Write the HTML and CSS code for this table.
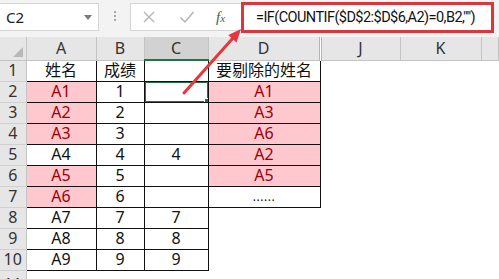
FILE: index.html
```html
<!DOCTYPE html>
<html lang="zh-CN">
<head>
<meta charset="utf-8">
<title>剔除姓名</title>
<link rel="stylesheet" href="styles.css">
</head>
<body>
<div class="app">
  <div class="bar">
    <div class="namebox"><span class="ref">C2</span><span class="drop"></span></div>
    <div class="grip"><i></i><i></i><i></i></div>
    <div class="fxbox">
      <svg class="ico" width="14" height="14" viewBox="0 0 14 14"><path d="M2 2 L12 12 M12 2 L2 12" stroke="#b4b4b4" stroke-width="1.4" fill="none"/></svg>
      <svg class="ico" width="16" height="14" viewBox="0 0 16 14"><path d="M1.5 7.5 L6 12 L14.5 2" stroke="#b4b4b4" stroke-width="1.5" fill="none"/></svg>
      <span class="fx">f<span class="x">x</span></span>
    </div>
    <div class="formula">=IF(COUNTIF($D$2:$D$6,A2)=0,B2,"")</div>
  </div>

  <table class="sheet">
    <colgroup>
      <col class="c-rh"><col class="c-a"><col class="c-b"><col class="c-c"><col class="c-d"><col class="c-j"><col class="c-k"><col>
    </colgroup>
    <thead>
      <tr>
        <th class="corner"><span class="tri"></span></th>
        <th>A</th><th>B</th><th class="on">C</th><th>D</th><th class="gap">J</th><th>K</th><th></th>
      </tr>
    </thead>
    <tbody>
      <tr><th>1</th><td class="b">姓名</td><td class="b">成绩</td><td class="b"></td><td class="b">要剔除的姓名</td><td></td><td></td><td></td></tr>
      <tr><th>2</th><td class="b p">A1</td><td class="b">1</td><td class="b sel"></td><td class="b p">A1</td><td></td><td></td><td></td></tr>
      <tr><th>3</th><td class="b p">A2</td><td class="b">2</td><td class="b"></td><td class="b p">A3</td><td></td><td></td><td></td></tr>
      <tr><th>4</th><td class="b p">A3</td><td class="b">3</td><td class="b"></td><td class="b p">A6</td><td></td><td></td><td></td></tr>
      <tr><th>5</th><td class="b">A4</td><td class="b">4</td><td class="b">4</td><td class="b p">A2</td><td></td><td></td><td></td></tr>
      <tr><th>6</th><td class="b p">A5</td><td class="b">5</td><td class="b"></td><td class="b p">A5</td><td></td><td></td><td></td></tr>
      <tr><th>7</th><td class="b p">A6</td><td class="b">6</td><td class="b"></td><td class="b dots">......</td><td></td><td></td><td></td></tr>
      <tr><th>8</th><td class="b">A7</td><td class="b">7</td><td class="b">7</td><td></td><td></td><td></td><td></td></tr>
      <tr><th>9</th><td class="b">A8</td><td class="b">8</td><td class="b">8</td><td></td><td></td><td></td><td></td></tr>
      <tr><th>10</th><td class="b">A9</td><td class="b">9</td><td class="b">9</td><td></td><td></td><td></td><td></td></tr>
      <tr><th>11</th><td></td><td></td><td></td><td></td><td></td><td></td><td></td></tr>
    </tbody>
  </table>

  <svg class="arrow" width="499" height="279" viewBox="0 0 499 279">
    <line x1="184" y1="93" x2="233" y2="38" stroke="#e8363c" stroke-width="3" stroke-linecap="round"/>
    <polygon points="241,29 236.5,42.4 228.3,35" fill="#e8363c"/>
  </svg>
</div>
</body>
</html>
```

FILE: styles.css
```css
* { box-sizing: border-box; }

html, body { margin: 0; padding: 0; }

body {
  width: 499px;
  height: 279px;
  overflow: hidden;
  background: #fff;
  font-family: "Noto Sans", "Noto Sans CJK SC", sans-serif;
}

.app {
  position: relative;
  width: 499px;
  height: 279px;
  overflow: hidden;
}

/* formula bar strip */
.bar {
  display: flex;
  align-items: flex-start;
  height: 37px;
  padding-top: 3px;
  background: #f3f3f3;
}

.namebox {
  width: 100px;
  height: 28px;
  margin-left: -1px;
  padding: 0 6px 0 6px;
  display: flex;
  align-items: center;
  justify-content: space-between;
  background: #fff;
  border: 1px solid #d6d6d6;
  font-size: 15px;
  color: #222;
}

.drop {
  width: 0;
  height: 0;
  border-left: 4px solid transparent;
  border-right: 4px solid transparent;
  border-top: 5px solid #7a7a7a;
}

.grip {
  width: 31px;
  display: flex;
  flex-direction: column;
  align-items: center;
  gap: 2px;
  padding-top: 8px;
}

.grip i {
  width: 2px;
  height: 2px;
  background: #a8a8a8;
}

.fxbox {
  width: 112px;
  height: 28px;
  display: flex;
  align-items: center;
  padding-left: 11px;
  gap: 23px;
  background: #fff;
  border: 1px solid #d6d6d6;
}

.fx {
  font-family: "Liberation Serif", serif;
  font-style: italic;
  font-size: 15px;
  color: #555;
  margin-left: -2px;
}

.fx .x { font-size: 11px; }

.formula {
  flex: 1;
  height: 31px;
  margin: -1px 5px 0 -1px;
  padding-left: 12px;
  border: 3px solid #d9363e;
  background: #fff;
  font-family: Roboto, "Noto Sans", sans-serif;
  font-size: 14.5px;
  letter-spacing: -0.55px;
  line-height: 25px;
  color: #111;
  white-space: nowrap;
  overflow: hidden;
}

/* worksheet grid */
.sheet {
  width: 499px;
  table-layout: fixed;
  border-collapse: collapse;
  font-size: 16px;
  color: #111;
}

.c-rh { width: 26px; }
.c-a { width: 70px; }
.c-b { width: 48px; }
.c-c { width: 64px; }
.c-d { width: 112px; }
.c-j { width: 80px; }
.c-k { width: 81px; }

.sheet thead tr { height: 23px; }
.sheet tbody tr { height: 21px; }

.sheet th,
.sheet td {
  padding: 0;
  text-align: center;
  vertical-align: middle;
  line-height: 19px;
  white-space: nowrap;
  overflow: hidden;
}

.sheet thead th {
  background: #e6e6e6;
  border-right: 1px solid #c4c4c4;
  border-bottom: 1px solid #c4c4c4;
  font-weight: normal;
  font-size: 16px;
  color: #333;
}

.sheet thead th.on {
  background: #d2d2d2;
  border-bottom: 2px solid #217346;
}

.sheet thead th.gap {
  border-left: 3px double #b4b4b4;
}

.sheet th.corner {
  position: relative;
}

.tri {
  position: absolute;
  right: 3px;
  bottom: 3px;
  width: 0;
  height: 0;
  border-left: 10px solid transparent;
  border-bottom: 10px solid #b8b8b8;
}

.sheet tbody th {
  background: #e6e6e6;
  border-right: 1px solid #c4c4c4;
  border-bottom: 1px solid #d0d0d0;
  font-weight: normal;
  font-size: 16px;
  color: #333;
  text-align: center;
}

.sheet tbody tr:last-child th {
  vertical-align: top;
  line-height: 20px;
  padding-top: 3px;
}

.sheet td.b { border: 1px solid #111; }

.sheet td.p {
  background: #ffc7ce;
  color: #9c0006;
}

.sheet td.dots {
  font-size: 12px;
  line-height: 12px;
  letter-spacing: 0.5px;
}

/* active cell frame with fill handle */
.sheet td.sel { position: relative; }

.sheet td.sel::before {
  content: "";
  position: absolute;
  inset: -1px;
  border: 2px solid #217346;
}

.sheet td.sel::after {
  content: "";
  position: absolute;
  right: -3px;
  bottom: -3px;
  width: 5px;
  height: 5px;
  background: #217346;
  border: 1px solid #fff;
}

.arrow {
  position: absolute;
  left: 0;
  top: 0;
  pointer-events: none;
}
```
